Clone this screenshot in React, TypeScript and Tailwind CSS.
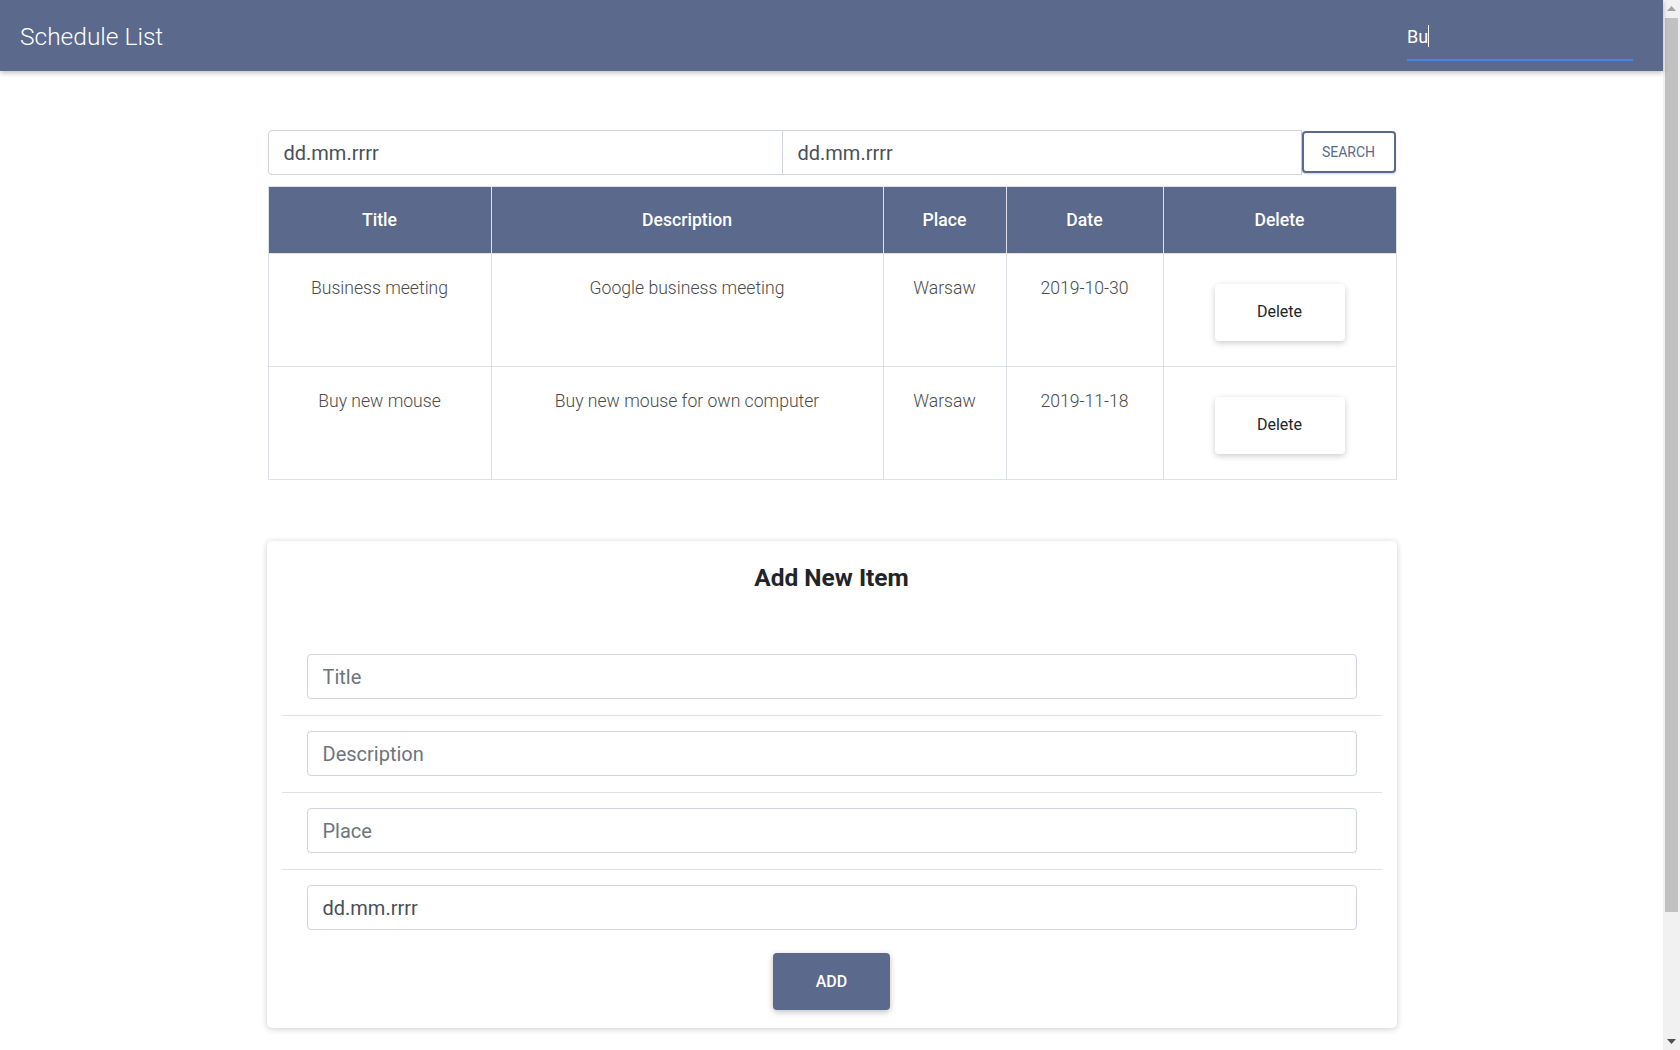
import { useState } from "react";

interface Item {
  title: string;
  description: string;
  place: string;
  date: string;
}

const ITEMS: Item[] = [
  {
    title: "Business meeting",
    description: "Google business meeting",
    place: "Warsaw",
    date: "2019-10-30",
  },
  {
    title: "Buy new mouse",
    description: "Buy new mouse for own computer",
    place: "Warsaw",
    date: "2019-11-18",
  },
];

const HEADERS = ["Title", "Description", "Place", "Date", "Delete"];

// Classic browser scrollbar, as it shows in the capture.
function Scrollbar() {
  return (
    <div className="flex h-screen w-[17px] flex-none flex-col items-center bg-[#f1f1f1]">
      <div className="flex h-[17px] w-full items-center justify-center">
        <svg width="9" height="5" viewBox="0 0 9 5">
          <path d="M0 5 L4.5 0 L9 5 Z" fill="#a3a3a3" />
        </svg>
      </div>
      <div className="mt-px h-[894px] w-[13px] bg-[#c1c1c1]" />
      <div className="flex-1" />
      <div className="flex h-[17px] w-full items-center justify-center">
        <svg width="9" height="5" viewBox="0 0 9 5">
          <path d="M0 0 L9 0 L4.5 5 Z" fill="#505050" />
        </svg>
      </div>
    </div>
  );
}

export default function App() {
  const [query, setQuery] = useState("Bu");

  return (
    <div className="flex h-screen overflow-hidden bg-white font-['Roboto',sans-serif]">
      <div className="min-w-0 flex-1 pb-[165px]">
        {/* Top bar */}
        <header className="relative z-10 flex h-[71px] items-start justify-between bg-[#5a698c] pl-5 pr-[30px] shadow-[0_2px_5px_rgba(0,0,0,0.25)]">
          <h1 className="mt-[21px] text-[24.5px] font-light leading-8 text-white">Schedule List</h1>
          <div className="mt-[13px] flex w-[226px] items-center border-b-2 border-[#4a82e6]">
            <input
              autoFocus
              value={query}
              onChange={(e) => setQuery(e.target.value)}
              size={2}
              className="h-[46px] w-[21px] bg-transparent text-[18px] text-white caret-white outline-none"
            />
            <span className="h-[22px] w-px bg-white" />
          </div>
        </header>

        <main className="mx-auto w-[1128px] pt-[59px]">
          {/* Date range search */}
          <div className="flex h-[45px] items-start">
            <input
              readOnly
              value="dd.mm.rrrr"
              className="h-[45px] w-[515px] rounded-l-[4px] border border-[#ced4da] px-[15px] text-[20px] text-[#495057] outline-none"
            />
            <input
              readOnly
              value="dd.mm.rrrr"
              className="h-[45px] flex-1 border-y border-r border-[#ced4da] px-[15px] text-[20px] text-[#495057] outline-none"
            />
            <button className="mt-px h-[42px] w-[94px] rounded-[4px] border-2 border-[#5a698c] bg-white text-[14px] uppercase text-[#5a698c] shadow-[0_1px_2px_rgba(0,0,0,0.2)]">
              Search
            </button>
          </div>

          {/* Schedule table */}
          <table className="mt-[11px] w-full table-fixed border-collapse">
            <colgroup>
              <col className="w-[223px]" />
              <col className="w-[392px]" />
              <col className="w-[123px]" />
              <col className="w-[157px]" />
              <col className="w-[233px]" />
            </colgroup>
            <thead>
              <tr className="h-[67px]">
                {HEADERS.map((h) => (
                  <th
                    key={h}
                    className="border border-[#dee2e6] bg-[#5a698c] text-center text-[17.6px] font-medium text-white"
                  >
                    {h}
                  </th>
                ))}
              </tr>
            </thead>
            <tbody>
              {ITEMS.map((it) => (
                <tr key={it.title} className="h-[113px]">
                  <td className="border border-[#dee2e6] pt-[21px] text-center align-top text-[17.6px] font-light leading-[26px] text-[#4a4a4a]">
                    {it.title}
                  </td>
                  <td className="border border-[#dee2e6] pt-[21px] text-center align-top text-[17.6px] font-light leading-[26px] text-[#4a4a4a]">
                    {it.description}
                  </td>
                  <td className="border border-[#dee2e6] pt-[21px] text-center align-top text-[17.6px] font-light leading-[26px] text-[#4a4a4a]">
                    {it.place}
                  </td>
                  <td className="border border-[#dee2e6] pt-[21px] text-center align-top text-[17.6px] font-light leading-[26px] text-[#4a4a4a]">
                    {it.date}
                  </td>
                  <td className="border border-[#dee2e6] pt-[4px] text-center align-middle">
                    <button className="h-[57px] w-[130px] rounded-[4px] bg-white text-[16px] text-[#212529] shadow-[0_2px_6px_rgba(0,0,0,0.2)]">
                      Delete
                    </button>
                  </td>
                </tr>
              ))}
            </tbody>
          </table>

          {/* Add form */}
          <section className="mx-[-1px] mt-[61px] rounded-[5px] bg-white px-[15px] pb-[18px] pt-[21px] shadow-[0_1px_6px_rgba(0,0,0,0.2)]">
            <h2 className="mb-[44px] text-center text-[24.5px] font-bold leading-8 text-[#212529]">Add New Item</h2>
            <div className="border-b border-[#dee2e6] px-[25px] py-4">
              <input
                placeholder="Title"
                className="h-[45px] w-full rounded-[4px] border border-[#ced4da] px-[15px] text-[20px] text-[#495057] outline-none placeholder:text-[#6c757d]"
              />
            </div>
            <div className="border-b border-[#dee2e6] px-[25px] pb-4 pt-[15px]">
              <input
                placeholder="Description"
                className="h-[45px] w-full rounded-[4px] border border-[#ced4da] px-[15px] text-[20px] text-[#495057] outline-none placeholder:text-[#6c757d]"
              />
            </div>
            <div className="border-b border-[#dee2e6] px-[25px] pb-4 pt-[15px]">
              <input
                placeholder="Place"
                className="h-[45px] w-full rounded-[4px] border border-[#ced4da] px-[15px] text-[20px] text-[#495057] outline-none placeholder:text-[#6c757d]"
              />
            </div>
            <div className="px-[25px] pt-[15px]">
              <input
                readOnly
                value="dd.mm.rrrr"
                className="h-[45px] w-full rounded-[4px] border border-[#ced4da] px-[15px] text-[20px] text-[#495057] outline-none"
              />
            </div>
            <button className="mx-auto mt-[23px] block h-[57px] w-[117px] rounded-[4px] bg-[#5a698c] text-[16px] font-medium text-white shadow-[0_2px_6px_rgba(0,0,0,0.25)]">
              ADD
            </button>
          </section>
        </main>
      </div>
      <Scrollbar />
    </div>
  );
}
